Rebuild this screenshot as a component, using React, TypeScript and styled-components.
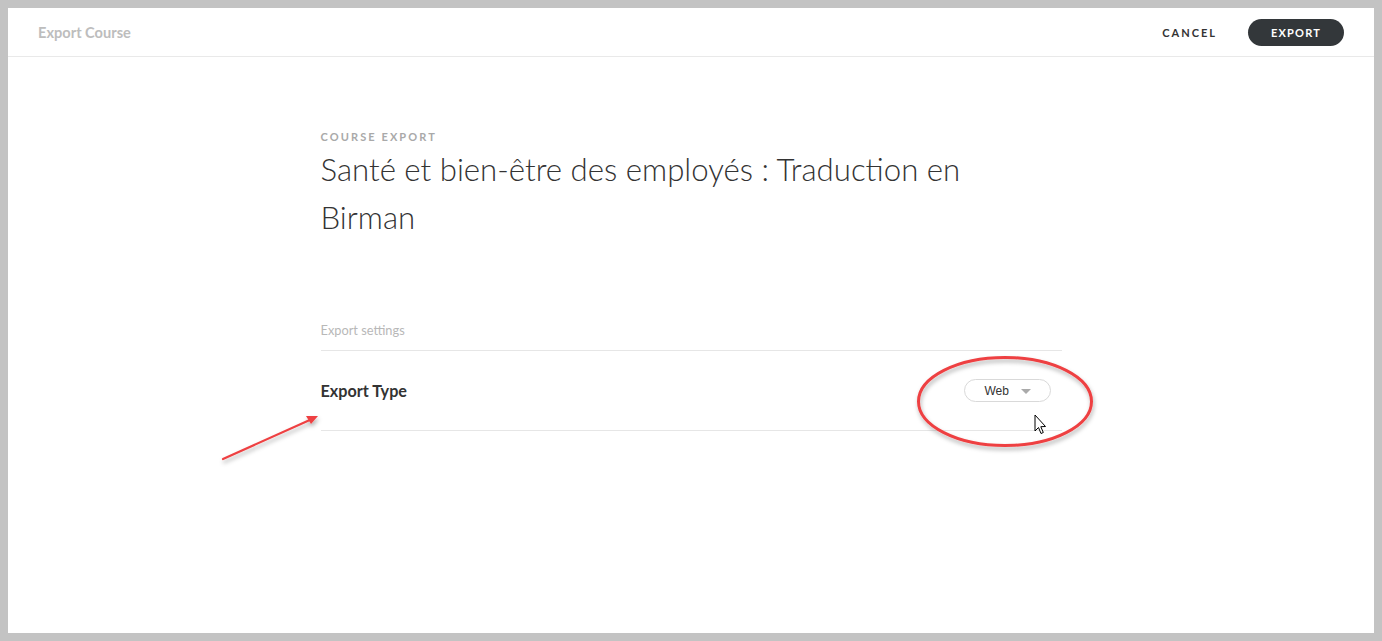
import React, { FC } from 'react'
import styled, { createGlobalStyle } from 'styled-components'

const GlobalStyle = createGlobalStyle`
  html, body {
    margin: 0;
    padding: 0;
    background: #c3c3c3;
    font-family: Lato, "Open Sans", Arial, sans-serif;
  }
`

const Frame = styled.div`
  position: relative;
  padding: 8px;
  height: 641px;
  box-sizing: border-box;
`

const Page = styled.div`
  background: #fff;
  height: 100%;
  display: flex;
  flex-direction: column;
`

const Header = styled.header`
  height: 48px;
  border-bottom: 1px solid #e9e9e9;
  display: flex;
  align-items: center;
  justify-content: space-between;
  padding: 0 30px;
`

const HeaderTitle = styled.div`
  font-size: 14.6px;
  font-weight: 700;
  color: #bdbdbd;
`

const Actions = styled.div`
  display: flex;
  align-items: center;
  gap: 31px;
`

const TextButton = styled.button`
  border: none;
  background: none;
  padding: 0;
  font-family: Lato, Arial, sans-serif;
  font-size: 11px;
  font-weight: 700;
  letter-spacing: 2px;
  color: #333;
  cursor: pointer;
`

const PrimaryButton = styled(TextButton)`
  background: #33373a;
  color: #fff;
  height: 27px;
  width: 96px;
  border-radius: 14px;
  letter-spacing: 1.2px;
  margin-top: 1px;
`

const Content = styled.main`
  width: 741px;
  margin: 0 auto;
  padding-top: 72px;
`

const Eyebrow = styled.div`
  font-size: 11px;
  line-height: 16px;
  font-weight: 700;
  letter-spacing: 2.1px;
  color: #a9a9a9;
`

const Title = styled.h1`
  margin: 0;
  font-size: 31.2px;
  line-height: 48px;
  font-weight: 300;
  color: #333;
  max-width: 660px;
`

const SectionLabel = styled.div`
  margin-top: 80px;
  font-size: 12.8px;
  line-height: 18px;
  color: #b8b8b8;
  padding-bottom: 11px;
  border-bottom: 1px solid #e6e6e6;
`

const SettingRow = styled.div`
  height: 79px;
  display: flex;
  align-items: center;
  justify-content: space-between;
  border-bottom: 1px solid #e6e6e6;
  padding-right: 11px;
`

const SettingName = styled.div`
  font-size: 16.2px;
  font-weight: 700;
  color: #333;
`

const Select = styled.div`
  width: 87px;
  height: 23px;
  box-sizing: border-box;
  border: 1px solid #d9d9d9;
  border-radius: 12px;
  display: flex;
  align-items: center;
  padding-left: 20px;
  padding-top: 1px;
  gap: 12px;
  font-family: "Liberation Sans", Arial, sans-serif;
  font-size: 12px;
  color: #333;
`

const Caret = styled.span`
  width: 0;
  height: 0;
  border-left: 5px solid transparent;
  border-right: 5px solid transparent;
  border-top: 5px solid #aaa;
  margin-top: 1px;
`

const Overlay = styled.svg`
  position: absolute;
  left: 0;
  top: 0;
  pointer-events: none;
`

const Annotations: FC = () => (
  <Overlay width={1382} height={641} viewBox="0 0 1382 641">
    <defs>
      <filter id="shadow" x="-20%" y="-20%" width="140%" height="140%">
        <feDropShadow dx="1" dy="3" stdDeviation="2" floodColor="#000" floodOpacity="0.3" />
      </filter>
    </defs>
    <g filter="url(#shadow)">
      <ellipse cx={1005} cy={401.5} rx={86.5} ry={44} fill="none" stroke="#ee4142" strokeWidth={3} />
      <line x1={223} y1={459} x2={312} y2={419} stroke="#ee4142" strokeWidth={2.2} strokeLinecap="round" />
      <polygon points="318,416 306,416 311,424" fill="#ee4142" />
    </g>
    <path
      d="M1035 415 L1035 431 L1038.5 427.5 L1041 433.5 L1043.3 432.5 L1040.8 426.7 L1045.5 426.5 Z"
      fill="#fff"
      stroke="#000"
      strokeWidth={1}
      strokeLinejoin="round"
    />
  </Overlay>
)

const App: FC = () => {
  return (
    <>
      <GlobalStyle />
      <Frame>
        <Page>
          <Header>
            <HeaderTitle>Export Course</HeaderTitle>
            <Actions>
              <TextButton>CANCEL</TextButton>
              <PrimaryButton>EXPORT</PrimaryButton>
            </Actions>
          </Header>
          <Content>
            <Eyebrow>COURSE EXPORT</Eyebrow>
            <Title>Santé et bien-être des employés : Traduction en Birman</Title>
            <SectionLabel>Export settings</SectionLabel>
            <SettingRow>
              <SettingName>Export Type</SettingName>
              <Select>
                Web <Caret />
              </Select>
            </SettingRow>
          </Content>
        </Page>
        <Annotations />
      </Frame>
    </>
  )
}

export default App
